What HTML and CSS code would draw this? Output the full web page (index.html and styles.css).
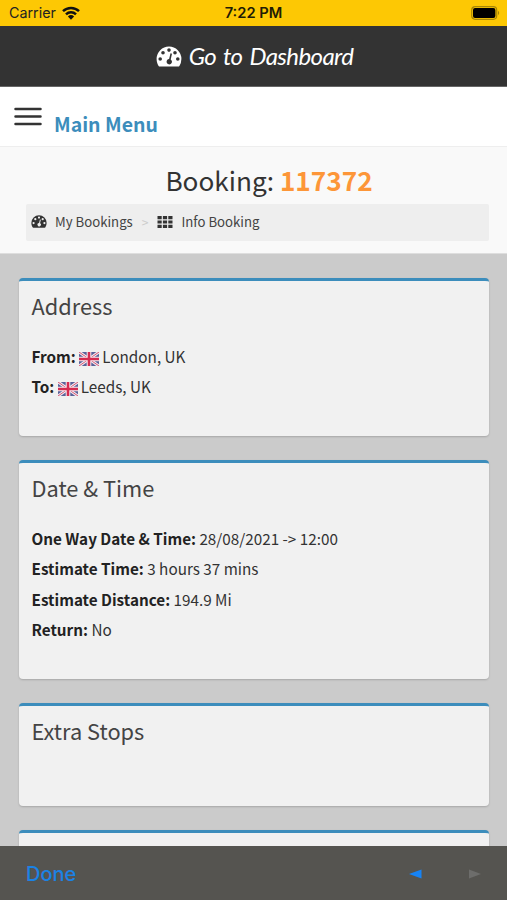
FILE: index.html
```html
<!DOCTYPE html>
<html lang="en">
<head>
<meta charset="utf-8">
<title>Booking 117372</title>
<link rel="stylesheet" href="styles.css">
</head>
<body>
<svg width="0" height="0" class="defs" aria-hidden="true">
  <symbol id="gauge" viewBox="0 0 26 21">
    <path fill="currentColor" fill-rule="evenodd" d="M13 .5A12.4 12.4 0 0 0 .6 13c0 2.600.8 5 2 6.900q.4.600 1.100.600h18.600q.7 0 1.100-.6A12.700 12.700 0 0 0 25.400 13 12.400 12.400 0 0 0 13 .5zM4.200 11.200a1.800 1.800 0 1 1 0 3.600 1.800 1.800 0 0 1 0-3.600zM7 5a1.800 1.800 0 1 1 0 3.600A1.800 1.800 0 0 1 7 5zM13 2.300a1.800 1.800 0 1 1 0 3.600 1.800 1.800 0 0 1 0-3.600zM19 5a1.800 1.800 0 1 1 0 3.600A1.800 1.800 0 0 1 19 5zM21.800 11.200a1.800 1.800 0 1 1 0 3.600 1.800 1.800 0 0 1 0-3.600zM14.500 7.300l1.500.400-1.300 5.700a2.700 2.700 0 1 1-1.600-.4z"/>
  </symbol>
  <symbol id="flag" viewBox="0 0 20 14">
    <path fill="#5a6299" d="M0 0h20v14H0z"/>
    <path stroke="#f3e9f0" stroke-width="3" d="M0 0l20 14M20 0L0 14"/>
    <path stroke="#d65672" stroke-width="1" d="M0 0l20 14M20 0L0 14"/>
    <path stroke="#f6eff3" stroke-width="4.600" d="M10 0v14M0 7h20"/>
    <path stroke="#d52b50" stroke-width="2.600" d="M10 0v14M0 7h20"/>
  </symbol>
</svg>
<div class="status">
  <div class="carrier"><span>Carrier</span>
    <svg width="18" height="14" viewBox="0 0 18 14"><g fill="none" stroke="#111" stroke-width="2.500"><path d="M1 5.200a11.500 11.500 0 0 1 16 0M4 8.300a7.200 7.200 0 0 1 10 0"/></g><path d="M9 13.700L5.900 10.500a4.500 4.500 0 0 1 6.200 0z" fill="#111"/></svg>
  </div>
  <div class="clock">7:22 PM</div>
  <svg class="battery" width="30" height="14" viewBox="0 0 30 14"><rect x=".7" y=".7" width="25" height="12.600" rx="3.500" fill="none" stroke="#a88705" stroke-width="1.200"/><rect x="2" y="2" width="22.400" height="10" rx="2" fill="#000"/><path d="M27 4.800q2.400 2.200 0 4.400z" fill="#a88705"/></svg>
</div>
<header class="dash"><svg width="26" height="21"><use href="#gauge"/></svg><span>Go to Dashboard</span></header>
<nav class="menu">
  <svg width="28" height="20" viewBox="0 0 28 20"><path d="M1.500 1.900h25M1.500 9.400h25M1.500 16.900h25" stroke="#333" stroke-width="2.500" stroke-linecap="round"/></svg>
  <span>Main Menu</span>
</nav>
<section class="heading">
  <h1>Booking: <b>117372</b></h1>
  <div class="crumbs">
    <svg width="16" height="13"><use href="#gauge"/></svg><span class="mine">My Bookings</span><i>&gt;</i>
    <svg class="grid" width="16" height="12" viewBox="0 0 16 12"><path d="M.5 1.600h15M.5 6h15M.5 10.400h15" stroke="#333" stroke-width="3.200" stroke-dasharray="4.200 1.200"/></svg><span class="info">Info Booking</span>
  </div>
</section>
<main>
  <section class="card address">
    <h2>Address</h2>
    <p><b>From:</b> <svg class="flag" width="20" height="14"><use href="#flag"/></svg><span>London, UK</span></p>
    <p><b>To:</b> <svg class="flag" width="20" height="14"><use href="#flag"/></svg><span>Leeds, UK</span></p>
  </section>
  <section class="card dates">
    <h2>Date &amp; Time</h2>
    <p><b>One Way Date &amp; Time:</b> 28/08/2021 -&gt; 12:00</p>
    <p><b>Estimate Time:</b> 3 hours 37 mins</p>
    <p><b>Estimate Distance:</b> 194.9 Mi</p>
    <p><b>Return:</b> No</p>
  </section>
  <section class="card stops"><h2>Extra Stops</h2></section>
  <section class="card next"></section>
</main>
<footer>
  <span>Done</span>
  <svg width="72" height="10" viewBox="0 0 72 10"><path d="M0 5l12.500-4.500v9z" fill="#1683f5"/><path d="M72 5L60 .5v9z" fill="#6d6d6b"/></svg>
</footer>
</body>
</html>
```
FILE: styles.css
```css
* { box-sizing: border-box; }
body {
  margin: 0;
  height: 900px;
  overflow: hidden;
  display: flex;
  flex-direction: column;
  font-family: "Noto Sans CJK SC", sans-serif;
  color: #333;
  background: #cbcbcb;
}
.defs { position: absolute; }
svg { flex: none; }
.status {
  height: 26px;
  flex: none;
  display: grid;
  grid-template-columns: 1fr auto 1fr;
  align-items: center;
  padding: 0 6px 0 9px;
  background: #fdc804;
  font: 14.3px/24px Inter, sans-serif;
  color: #222;
}
.carrier { display: flex; align-items: center; gap: 6px; }
.clock { font-size: 14.7px; font-weight: 600; color: #221c05; padding-right: 3px; }
.battery { justify-self: end; }
.dash {
  height: 61px;
  flex: none;
  display: flex;
  align-items: center;
  justify-content: center;
  gap: 7px;
  padding-left: 2px;
  background: #333;
  border-bottom: 1px solid #666;
  color: #fff;
  font: italic 24px/60px Lato, cursive;
  letter-spacing: -0.6px;
  word-spacing: 2px;
}
.menu {
  height: 60px;
  flex: none;
  display: flex;
  align-items: flex-start;
  padding: 20px 14px 0;
  gap: 12px;
  background: #fff;
  border-bottom: 1px solid #eee;
  color: #3c8dbc;
  font-size: 19.5px;
  font-weight: 700;
  line-height: 34px;
}
.heading { height: 107px; flex: none; padding: 12px 18px 0 26px; background: #f9f9f9; border-bottom: 1px solid #dedede; }
h1 { margin: 0; padding-left: 23px; text-align: center; font-size: 26.2px; font-weight: 400; line-height: 42px; height: 45px; }
h1 b { color: #fd9638; }
.crumbs {
  height: 37px;
  display: flex;
  align-items: center;
  padding: 0 0 2px 5px;
  border-radius: 2px;
  background: #eee;
  font-size: 13.2px;
  line-height: 20px;
  color: #444;
}
.crumbs svg { color: #333; }
.mine { margin-left: 8px; }
.crumbs i { margin: 0 9px; font-style: normal; font-size: 12px; color: #ccc; }
.info { margin-left: 8px; }
main { padding: 24px 18px 0 19px; display: flex; flex-direction: column; gap: 24px; }
.card {
  flex: none;
  padding: 7px 12.5px 0;
  border-top: 3px solid #3c8dbc;
  border-radius: 4px;
  background: #f1f1f1;
  box-shadow: 0 1px 2px rgba(0, 0, 0, .18);
}
.address { height: 158px; }
.dates { height: 219px; }
.stops { height: 103px; }
.next { height: 60px; }
h2 { margin: 0 0 16.6px; font-size: 21.8px; line-height: 36px; font-weight: 400; color: #444; }
p { margin: 0; font-size: 15.28px; line-height: 30.6px; }
p b { color: #222; }
.flag { vertical-align: -3px; margin-right: 3px; }
footer {
  position: absolute;
  left: 0;
  right: 0;
  bottom: 0;
  height: 54px;
  display: flex;
  align-items: center;
  justify-content: space-between;
  padding: 2px 26px 0;
  background: #555450;
  color: #1b82e5;
  font: 500 20px/52px Inter, sans-serif;
}
```
